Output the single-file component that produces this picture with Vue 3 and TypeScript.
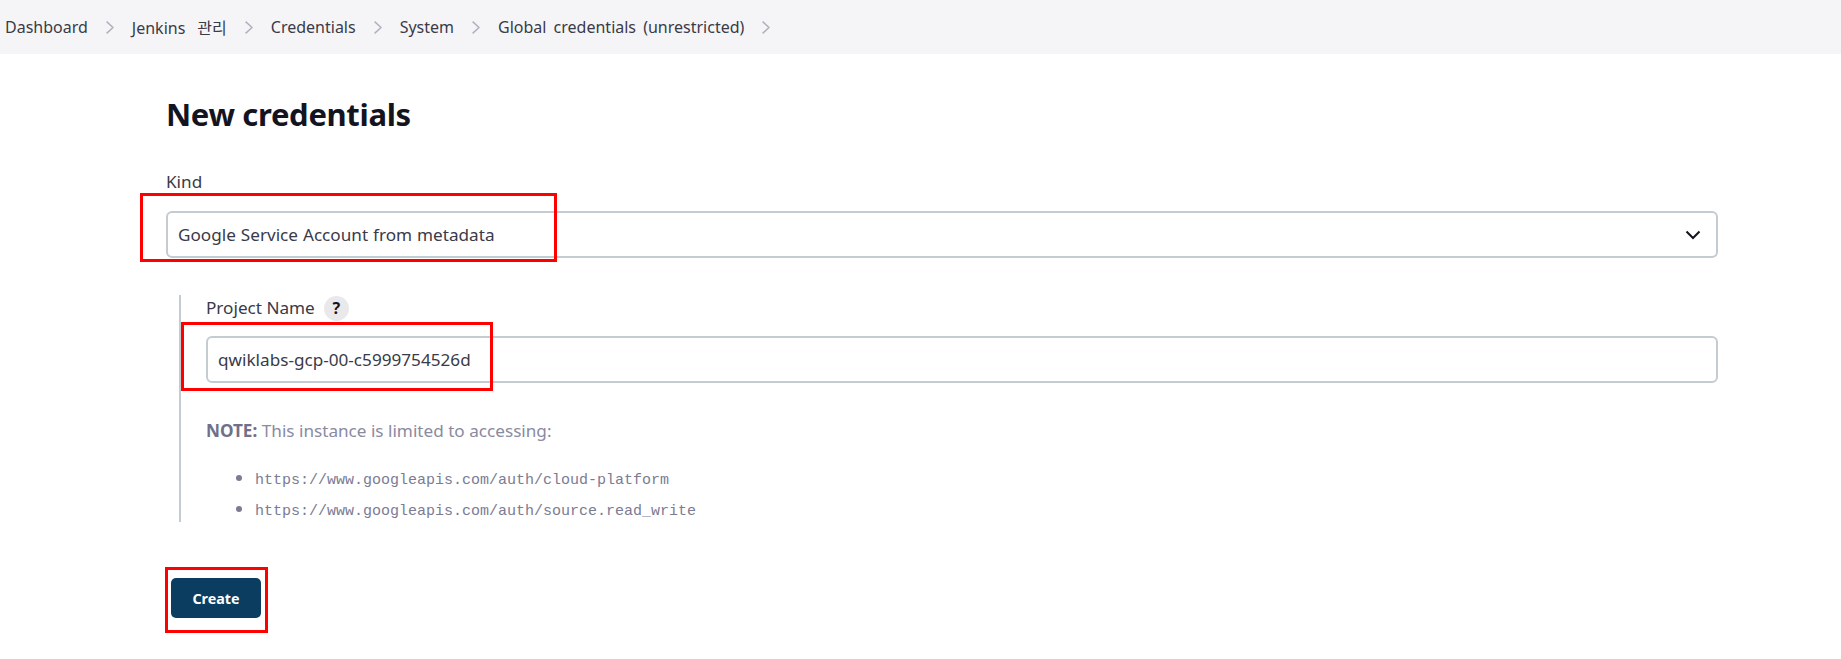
<script setup lang="ts">
interface Crumb { label: string; ko?: string }
const crumbs: Crumb[] = [
  { label: 'Dashboard' },
  { label: 'Jenkins', ko: '관리' },
  { label: 'Credentials' },
  { label: 'System' },
  { label: 'Global credentials (unrestricted)' },
]
const scopes: string[] = [
  'https://www.googleapis.com/auth/cloud-platform',
  'https://www.googleapis.com/auth/source.read_write',
]
</script>

<template>
  <div class="page">
    <nav class="crumbs">
      <div v-for="c in crumbs" :key="c.label" class="crumb">
        <span>{{ c.label }}<span v-if="c.ko" class="ko">{{ c.ko }}</span></span>
        <svg class="sep" width="8" height="13" viewBox="0 0 8 13" fill="none">
          <path d="M.6.6 7 6.5.6 12.4" stroke="#b0b0be" stroke-width="1.5" />
        </svg>
      </div>
    </nav>

    <main class="main">
      <h1>New credentials</h1>
      <div class="kind-label">Kind</div>
      <div class="field select">
        <span>Google Service Account from metadata</span>
        <svg width="16" height="10" viewBox="0 0 16 10" fill="none">
          <path d="M1.5 1.5 8 8l6.5-6.5" stroke="#14141f" stroke-width="2" />
        </svg>
      </div>

      <section class="nested">
        <div class="project-label">
          <span class="project-text">Project Name</span>
          <span class="help">?</span>
        </div>
        <div class="field">qwiklabs-gcp-00-c5999754526d</div>
        <p class="note"><b>NOTE:</b> This instance is limited to accessing:</p>
        <ul>
          <li v-for="s in scopes" :key="s"><code>{{ s }}</code></li>
        </ul>
      </section>

      <button class="create" type="button">Create</button>
    </main>

    <div class="mark mark-kind"></div>
    <div class="mark mark-project"></div>
    <div class="mark mark-create"></div>
  </div>
</template>

<style>
html, body { margin: 0; background: #fff; }
</style>

<style scoped>
.page {
  position: relative;
  width: 1841px;
  height: 659px;
  overflow: hidden;
  background: #fff;
  color: #3a3a48;
  font-family: "Noto Sans", "Noto Sans CJK KR", sans-serif;
  font-size: 17.15px;
}
.crumbs {
  height: 54px;
  box-sizing: border-box;
  padding-left: 5px;
  display: flex;
  align-items: center;
  background: #f5f5f7;
  font-size: 16px;
  word-spacing: 3px;
}
.crumb { display: flex; align-items: center; }
.ko { margin-left: 12px; }
.sep { margin: 0 18px; }
.main { padding: 0 123px 0 166px; }
h1 {
  margin: 37px 0 0;
  font-size: 31px;
  letter-spacing: -0.33px;
  line-height: 46px;
  font-weight: 700;
  color: #14141f;
}
.kind-label {
  margin: 35px 0 19px;
  line-height: 20px;
}
.field {
  height: 47px;
  box-sizing: border-box;
  border: 2px solid #c3ccd1;
  border-radius: 6px;
  padding: 0 10px;
  display: flex;
  align-items: center;
  background: #fff;
}
.select { justify-content: space-between; padding-right: 15px; word-spacing: 0.5px; }
.nested {
  margin: 37px 0 0 13px;
  border-left: 2px solid #c3ccd1;
  padding-left: 25px;
}
.project-label {
  height: 26px;
  display: flex;
  align-items: center;
  gap: 9px;
  margin-bottom: 15px;
}
.project-text { padding-bottom: 2px; }
.help {
  width: 25px;
  height: 25px;
  border-radius: 50%;
  background: #e9e9eb;
  color: #14141f;
  font-size: 16px;
  font-weight: 700;
  display: flex;
  align-items: center;
  justify-content: center;
}
.note {
  margin: 36px 0 0;
  line-height: 24px;
  color: #8a8aa0;
}
.note b { font-weight: 700; color: #70708a; }
ul {
  margin: 22px 0 0;
  padding: 0 0 0 49px;
  display: flex;
  flex-direction: column;
  gap: 5px;
  color: #7b7b93;
}
li { height: 26px; line-height: 26px; }
code {
  font-family: "Liberation Mono", monospace;
  font-size: 15px;
}
.create {
  display: block;
  margin: 56px 0 0 5px;
  width: 90px;
  height: 40px;
  border: 0;
  border-radius: 5px;
  background: #0a3d5f;
  color: #fff;
  font-family: inherit;
  font-size: 14.3px;
  font-weight: 700;
}
.mark {
  position: absolute;
  box-sizing: border-box;
  border: 3px solid #f00;
}
.mark-kind { left: 140px; top: 193px; width: 417px; height: 69px; }
.mark-project { left: 181px; top: 322px; width: 312px; height: 69px; }
.mark-create { left: 165px; top: 567px; width: 103px; height: 66px; }
</style>
